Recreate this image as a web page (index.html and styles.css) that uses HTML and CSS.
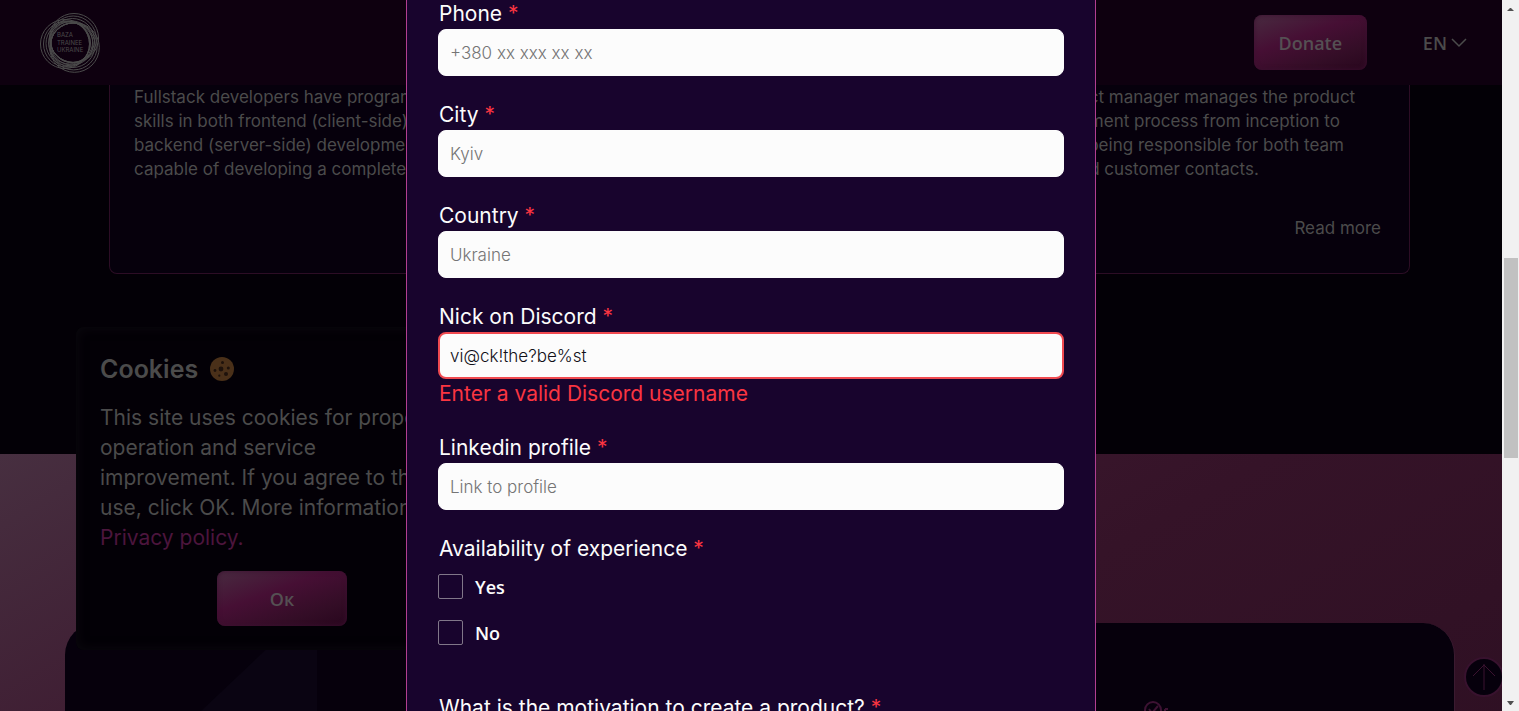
FILE: index.html
```html
<!DOCTYPE html>
<html lang="en">
<head>
<meta charset="utf-8">
<title>Baza Trainee Ukraine</title>
<link rel="stylesheet" href="styles.css">
</head>
<body>
<div class="page">
  <header class="header">
    <a class="logo" href="#" aria-label="Baza Trainee Ukraine">
      <svg width="60" height="60" viewBox="0 0 60 60">
        <g class="logo-rings">
          <circle cx="34" cy="25" r="24.500"/><circle cx="33.200" cy="26.200" r="23.200"/><circle cx="32.500" cy="27.500" r="22"/><circle cx="31.800" cy="28.800" r="20.800"/>
          <circle cx="25" cy="31" r="24.500"/><circle cx="26.500" cy="31" r="23"/><circle cx="28" cy="30.500" r="22"/><circle cx="29.500" cy="30" r="21"/>
          <circle cx="34.500" cy="34.500" r="24.800"/><circle cx="33.700" cy="33.400" r="23.500"/><circle cx="32.800" cy="32.300" r="22.200"/><circle cx="32" cy="31" r="21"/>
        </g>
        <g class="logo-text"><text x="17" y="24">BAZA</text><text x="17" y="32">TRAINEE</text><text x="17" y="39">UKRAINE</text></g>
      </svg>
    </a>
    <div class="header-actions">
      <button class="btn btn-donate" type="button">Donate</button>
      <button class="lang" type="button">EN
        <svg width="16" height="10" viewBox="0 0 16 10"><path d="M1 1l7 7 7-7"/></svg>
      </button>
    </div>
  </header>

  <main>
    <section class="roles">
      <article class="role">
        <p>Fullstack developers have programming<br>skills in both frontend (client-side) and<br>backend (server-side) development, are<br>capable of developing a complete app.</p>
      </article>
      <article class="role role-manager">
        <p>A product manager manages the product<br>development process from inception to<br>launch, being responsible for both team<br>work and customer contacts.</p>
        <a class="more" href="#">Read more</a>
      </article>
    </section>

    <section class="stats">
      <div class="stats-card">
        <svg class="digit" width="117" height="89" viewBox="0 0 117 89"><path d="M94 0h23v89H0z"/></svg>
        <svg class="check" width="26" height="20" viewBox="0 0 26 20"><circle cx="10" cy="10" r="8"/><path d="M6 9l3 4 6-7M22 9h3M22 9v6"/></svg>
      </div>
    </section>
  </main>

  <button class="to-top" type="button" aria-label="Back to top">
    <svg width="24" height="28" viewBox="0 0 24 28"><path d="M12 27V1M1 13L12 2l11 11"/></svg>
  </button>

  <aside class="cookies">
    <h2>Cookies
      <svg width="24" height="24" viewBox="0 0 24 24"><circle class="biscuit" cx="12" cy="12" r="12"/><g class="chips"><circle cx="11" cy="12" r="2.400"/><circle cx="12.500" cy="5.500" r="1.500"/><circle cx="18.300" cy="11" r="1.500"/><circle cx="16" cy="17" r="2"/><circle cx="5" cy="13.500" r="1.400"/><circle cx="9.300" cy="18.700" r="1.100"/></g></svg>
    </h2>
    <p>This site uses cookies for proper<br>operation and service<br>improvement. If you agree to their<br>use, click OK. More information in<br><a href="#">Privacy policy.</a></p>
    <button class="btn btn-ok" type="button">Ок</button>
  </aside>

  <div class="overlay">
    <form class="modal">
      <div class="field"><label for="phone">Phone <b>*</b></label><input id="phone" type="tel" placeholder="+380 xx xxx xx xx"></div>
      <div class="field"><label for="city">City <b>*</b></label><input id="city" type="text" placeholder="Kyiv"></div>
      <div class="field"><label for="country">Country <b>*</b></label><input id="country" type="text" placeholder="Ukraine"></div>
      <div class="field"><label for="discord">Nick on Discord <b>*</b></label><input id="discord" class="invalid" type="text" value="vi@ck!the?be%st" aria-describedby="discord-error"><p class="error" id="discord-error">Enter a valid Discord username</p></div>
      <div class="field"><label for="linkedin">Linkedin profile <b>*</b></label><input id="linkedin" type="text" placeholder="Link to profile"></div>
      <fieldset>
        <legend>Availability of experience <b>*</b></legend>
        <label class="choice"><input type="checkbox">Yes</label>
        <label class="choice"><input type="checkbox">No</label>
      </fieldset>
      <div class="field"><label for="motivation">What is the motivation to create a product? <b>*</b></label><input id="motivation" type="text"></div>
    </form>
  </div>
</div>
<div class="scrollbar">
  <svg width="17" height="17" viewBox="0 0 17 17"><path d="M5 11l3-3h1l3 3z"/></svg>
  <div class="track"><div class="thumb"></div></div>
  <svg width="17" height="17" viewBox="0 0 17 17"><path d="M5 7h7l-3 4H8z"/></svg>
</div>
</body>
</html>
```
FILE: styles.css
```css
* { box-sizing: border-box; }

body {
  margin: 0;
  display: flex;
  height: 100vh;
  overflow: hidden;
  background: #030006;
  color: #4b4b4b;
  font-family: Inter, "Noto Sans", sans-serif;
}

h2, p { margin: 0; }
a { color: inherit; text-decoration: none; }
button { font: inherit; color: inherit; border: 0; padding: 0; background: none; }
svg { display: block; fill: none; flex: none; }

.page { position: relative; flex: 1; min-width: 0; overflow: hidden; }

.header {
  display: flex;
  justify-content: space-between;
  align-items: center;
  height: 85px;
  padding: 0 35px 0 40px;
  background: #0e000f;
}
.logo-rings { stroke: #4b4b4b; stroke-width: 1; }
.logo-text { fill: #4b4b4b; font: 6px Inter, sans-serif; }
.header-actions { display: flex; align-items: center; gap: 56px; }

.btn {
  height: 55px;
  border-radius: 8px;
  color: #555053;
  font: 600 18px "Open Sans", sans-serif;
  background: linear-gradient(160deg, #482b40 0%, #460f34 40%, #330d26 75%, #28061d 100%);
  box-shadow: inset 0 0 5px #3c1030;
}
.btn-donate { width: 113px; }
.lang { display: flex; align-items: center; gap: 4px; font: 600 18px "Open Sans", sans-serif; }
.lang svg { stroke: #4b4b4b; stroke-width: 1.5; }

.roles {
  display: flex;
  justify-content: space-between;
  height: 369px;
  padding: 0 92px 180px 109px;
}
.role {
  display: flex;
  flex-direction: column;
  justify-content: space-between;
  width: 410px;
  padding: 0 24px 33px;
  border: 1px solid #2c0d25;
  border-top: 0;
  border-radius: 0 0 8px 8px;
  background: #06000c;
  font-size: 17px;
  line-height: 24px;
  white-space: nowrap;
}
.role-manager { padding-right: 28px; }
.more { align-self: flex-end; }

.stats {
  height: 400px;
  padding: 169px 47px 0 65px;
  background: linear-gradient(150deg, #472f40 0%, #3d1a30 30%, #351328 58%, #2d0f22 100%);
}
.stats-card {
  display: flex;
  justify-content: space-between;
  height: 100%;
  padding: 0 285px 0 135px;
  border-radius: 32px 32px 0 0;
  background: #06000c;
  border-right: 1px solid #3a1a30;
}
.digit { fill: #0a0412; }
.check { margin-top: 77px; stroke: #3d1233; stroke-width: 2; }

.to-top {
  position: absolute;
  right: -2px;
  bottom: 14px;
  display: grid;
  place-items: center;
  width: 40px;
  height: 40px;
  border: 2px solid #38122e;
  border-radius: 50%;
  background: #06000c;
}
.to-top svg { stroke: #3b1230; stroke-width: 1; }

.cookies {
  position: absolute;
  left: 76px;
  bottom: 61px;
  width: 412px;
  padding: 24px;
  border-radius: 8px;
  background: #030006;
  box-shadow: inset 0 0 12px #0c090f;
}
.cookies h2 {
  display: flex;
  align-items: center;
  gap: 12px;
  margin-bottom: 16px;
  font-size: 25px;
  font-weight: 600;
  line-height: 36px;
}
.cookies p { font-size: 21px; line-height: 30px; white-space: nowrap; }
.cookies p a { color: #4c153d; }
.btn-ok { display: block; width: 130px; margin: 18px auto 0; }
.biscuit { fill: #4a3019; }
.chips { fill: #1e120c; }

.overlay {
  position: absolute;
  inset: 0;
  display: flex;
  justify-content: center;
  overflow: hidden;
}
.modal {
  width: 690px;
  height: 1000px;
  margin-top: -2px;
  padding: 0 31px;
  border: 1px solid #b13f91;
  background: #18042d;
  color: #fcfcfc;
}
.field { margin-bottom: 24px; }
.field > label, legend, .error {
  display: block;
  padding: 0 1px;
  font-size: 21px;
  line-height: 30px;
}
.modal b { color: #fa3541; font-weight: 400; }
.field input {
  display: block;
  width: 100%;
  height: 47px;
  padding: 0 11px;
  border: 1px solid #fcfcfc;
  border-radius: 8px;
  background: #fcfcfc;
  color: #111018;
  font: 300 17px Inter, "Noto Sans", sans-serif;
}
.field input::placeholder { color: #757575; }
.field input.invalid { border: 2px solid #f04a50; padding: 0 10px; }
.error { color: #fa3541; }

fieldset {
  margin: 0 0 27px;
  padding: 0;
  border: 0;
}
.choice {
  display: flex;
  align-items: center;
  gap: 12px;
  width: max-content;
  height: 25px;
  margin: 10px 0 21px;
  font: 600 18px "Open Sans", sans-serif;
}
.choice input {
  appearance: none;
  width: 25px;
  height: 25px;
  margin: 0;
  border: 1px solid #817789;
  border-radius: 2px;
}

.scrollbar {
  display: flex;
  flex-direction: column;
  width: 17px;
  background: #f1f1f1;
}
.scrollbar svg { fill: #505050; }
.track { flex: 1; padding: 241px 1px 0 2px; }
.thumb { height: 200px; background: #c1c1c1; }
```
